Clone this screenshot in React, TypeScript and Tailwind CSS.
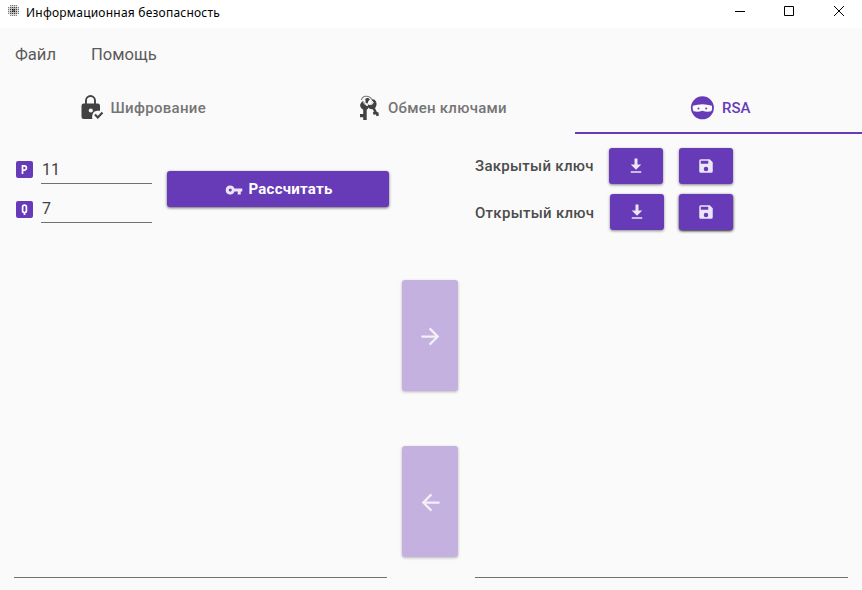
import React from 'react';

type IconProps = { d: string; className?: string };

function Icon({ d, className = '' }: IconProps) {
  return (
    <svg viewBox="0 0 24 24" fill="currentColor" className={`shrink-0 ${className}`}>
      <path fillRule="evenodd" d={d} />
    </svg>
  );
}

const DOWNLOAD = 'M14 2v8h5l-7 7-7-7h5V2zM5 19h14v2H5z';
const SAVE =
  'M15 9H5V5h10m-3 14a3 3 0 0 1-3-3 3 3 0 0 1 3-3 3 3 0 0 1 3 3 3 3 0 0 1-3 3m5-16H5a2 2 0 0 0-2 2v14a2 2 0 0 0 2 2h14a2 2 0 0 0 2-2V7l-4-4z';
const KEY =
  'M7 14a2 2 0 1 1 0-4 2 2 0 0 1 0 4m5.65-4A5.99 5.99 0 0 0 7 6a6 6 0 1 0 5.65 8H17v4h4v-4h2v-4H12.65z';
const ARROW_RIGHT = 'M4 11v2h12l-5.5 5.5 1.42 1.42L19.84 12l-7.92-7.92L10.5 5.5 16 11H4z';
const ARROW_LEFT = 'M20 11v2H8l5.5 5.5-1.42 1.42L4.16 12l7.92-7.92L13.5 5.5 8 11h12z';

function LockCheck() {
  return (
    <svg viewBox="0 0 24 26" className="-mt-0.5 h-[26px] w-6 shrink-0" fill="none">
      <path d="M6 11V6.500a4.500 4.500 0 0 1 9 0V11" stroke="#424242" strokeWidth="1.900" />
      <rect x="1.500" y="9.500" width="18.500" height="15.500" rx="2.200" fill="#424242" />
      <circle cx="10.800" cy="16.500" r="2.100" fill="#fafafa" />
      <path d="M12.500 26c-.8-2.500-.5-6 1.500-8.300l3-1h7V26z" fill="#fafafa" />
      <path d="M15 20.600l2.800 2.800 4.700-4.900" stroke="#424242" strokeWidth="2.100" />
    </svg>
  );
}

function Keys() {
  return (
    <svg viewBox="0 0 20 26" className="h-[26px] w-5 shrink-0" fill="#424242">
      <path d="M2.500 5C3 .3 10.500-.2 12.800 4.500" fill="none" stroke="#777" strokeWidth="1.100" />
      <path d="M4 6L2.500 7.200Q.6 9 1.200 11.300Q1.700 13.700 4.200 14.700V19H1v3.300h3.200V25h3.500V14.700Q9.800 13.700 9.400 11.500L7 10.500L5.700 8z" />
      <path d="M6.200 3.800L9 2.800L11 4.500L9.300 6L8.700 8.500L6.700 8z" />
      <path d="M12.700 4.500Q15.500 3.600 17 6.500Q18.500 10 16 13.200L18 17.300L19.200 17L20 20.500L17.700 21.300L16.600 19.200L14.800 20L13.800 17.400L15 16.500L13.700 14.200Q9.800 14.500 8.800 11.500L8.900 9.200Q10 10.300 11.700 9.800L14 7.600L12.500 6z" />
      <path d="M12.200 5L14.400 7.500L12.200 10.200" fill="none" stroke="#fafafa" strokeWidth=".9" />
      <path d="M6 5.500L4.500 7.800L6.800 10.200" fill="none" stroke="#fafafa" strokeWidth=".8" />
    </svg>
  );
}

function Ninja() {
  return (
    <svg viewBox="0 0 24 24" className="mt-0.5 size-6 shrink-0" fill="#673ab7">
      <circle cx="12.400" cy="11.800" r="11.500" />
      <path d="M2.700 9.700Q12.400 6.700 22 9.700Q22.500 13 21.300 15.300Q17 16.500 12.400 14.800Q8 16.500 3.500 15.300Q2.300 13 2.700 9.700z" fill="#fafafa" />
      <circle cx="8.500" cy="12.600" r="1" />
      <circle cx="16.200" cy="12.600" r="1" />
    </svg>
  );
}

function AppMark() {
  const dots: [number, number, number][] = [];
  for (let y = 0; y < 6; y++)
    for (let x = 0; x < 6; x++) {
      const distance = Math.hypot(x - 2.5, y - 2.5);
      if (distance < 3.3) dots.push([x * 2 + 1, y * 2, 1 - distance * 0.2]);
    }
  return (
    <svg viewBox="0 0 12 12" className="size-3 shrink-0" shapeRendering="crispEdges">
      <rect x="1" y="2" width="11" height="7" fill="#000" opacity=".14" />
      <rect x="3" y="0" width="7" height="11" fill="#000" opacity=".14" />
      <rect x="5" y="4" width="3" height="3" fill="#000" opacity=".4" />
      {dots.map(([x, y, opacity]) => (
        <rect key={`${x}-${y}`} x={x} y={y} width="1" height="1" fill="#000" opacity={opacity} />
      ))}
    </svg>
  );
}

function TitleBar() {
  return (
    <header className="flex h-7 items-start justify-between bg-white">
      <div className="flex pt-[5px] pl-[7px]">
        <AppMark />
        <span className="ml-[7px] h-4 text-[12px] leading-4 tracking-[0.22px] whitespace-nowrap text-black font-['Noto_Sans','Open_Sans',sans-serif]">
          Информационная безопасность
        </span>
      </div>
      <div className="flex gap-[38px] pt-[5px] pr-[17px]">
        <svg className="h-3 w-3" viewBox="0 0 12 12" shapeRendering="crispEdges"><path d="M2 6h10v1H2z" /></svg>
        <svg className="h-3 w-3" viewBox="0 0 12 12" fill="none" stroke="#000"><path d="M1.500 1.500h9v9h-9z" /></svg>
        <svg className="h-3 w-3" viewBox="0 0 12 12" stroke="#000"><path d="M1 1l10 10M11 1L1 11" /></svg>
      </div>
    </header>
  );
}

function PrimeField({ letter, value }: { letter: string; value: string }) {
  return (
    <label className="flex h-[39px] items-end">
      <span
        className={`ml-4 flex size-[17px] items-center justify-center rounded-[2px] bg-[#673ab7] text-white ${
          letter === 'P' ? 'mb-1.5' : 'mb-[5px]'
        }`}
      >
        <svg viewBox="0 0 17 17" className="size-[17px]" fill="none" stroke="currentColor" strokeWidth="1.700">
          {letter === 'P' ? (
            <path d="M6.500 13V4.900h1.800a2.100 2.100 0 0 1 0 4.200H6.500" />
          ) : (
            <path d="M8.500 4.200q-1.900 0-1.900 1.900v3.600q0 1.900 1.900 1.900t1.900-1.900V6.100q0-1.900-1.900-1.900zM8.500 11v3" />
          )}
        </svg>
      </span>
      <span className="ml-2 flex h-[30px] w-[111px] border-b border-[#707070] pl-px text-[16px] leading-[31px] text-[#424242]">
        {value}
      </span>
    </label>
  );
}

function IconButton({ d, raised = false }: { d: string; raised?: boolean }) {
  return (
    <button
      className={`flex h-9 w-[54px] items-center justify-center rounded-[3px] bg-[#673ab7] text-white/87 ${
        raised ? 'shadow-[0_1px_3px_#000e]' : 'shadow-[0_1px_3px_#0007]'
      }`}
    >
      <Icon d={d} className="size-[18px]" />
    </button>
  );
}

function ArrowButton({ d }: { d: string }) {
  return (
    <button className="flex h-[111px] w-14 items-center justify-center rounded-[3px] bg-[#c4b1e0] text-white/80 shadow-[0_1px_3px_#0004]">
      <Icon d={d} className="mt-px ml-px size-[27px]" />
    </button>
  );
}

export default function App() {
  return (
    <div className="flex h-[590px] w-[862px] flex-col overflow-hidden bg-[#fafafa] font-[Roboto,sans-serif] text-[#4c4c4c]">
      <TitleBar />
      <nav className="flex h-[54px] items-center gap-[35px] pl-[15px] text-[16.6px] text-[#5a5a5a]">
        <span>Файл</span>
        <span>Помощь</span>
      </nav>
      <nav className="grid h-[52px] grid-cols-[288px_287px_287px] text-[15px] font-medium tracking-[0.3px] text-[#757575]">
        <div className="flex items-center pl-20">
          <LockCheck />
          <span className="ml-[6.500px]">Шифрование</span>
        </div>
        <div className="flex items-center pl-[71px]">
          <Keys />
          <span className="ml-[9px] tracking-[0.26px]">Обмен ключами</span>
        </div>
        <div className="flex items-center border-b-2 border-[#673ab7] pl-[115px] tracking-normal text-[#673ab7]">
          <Ninja />
          <span className="mt-0.5 ml-[8px]">RSA</span>
        </div>
      </nav>
      <section className="flex h-[108px]">
        <div className="flex w-[475px]">
          <div className="pt-[11px]">
            <PrimeField letter="P" value="11" />
            <PrimeField letter="Q" value="7" />
          </div>
          <button className="mt-[37px] ml-[15px] flex h-9 w-[222px] items-center justify-center rounded-[3px] bg-[#673ab7] pt-px pl-0.5 text-[15px] font-bold tracking-[0.25px] text-white shadow-[0_1px_3px_#0009]">
            <Icon d={KEY} className="mr-[5px] size-[18px] text-white/87" />
            Рассчитать
          </button>
        </div>
        <div className="flex flex-col gap-[10px] pt-[14px] text-[15px] font-medium tracking-[0.28px]">
          <div className="flex items-center">
            <span className="w-[134px]">Закрытый ключ</span>
            <IconButton d={DOWNLOAD} />
            <span className="w-4" />
            <IconButton d={SAVE} />
          </div>
          <div className="flex items-center">
            <span className="w-[135px] pt-0.5">Открытый ключ</span>
            <IconButton d={DOWNLOAD} />
            <span className="w-[15px]" />
            <IconButton d={SAVE} raised />
          </div>
        </div>
      </section>
      <main className="flex h-[336px] px-[14px]">
        <div className="w-[373px] border-b border-[#707070]" />
        <div className="ml-[15px] flex w-14 flex-col gap-[55px] pt-[38px]">
          <ArrowButton d={ARROW_RIGHT} />
          <ArrowButton d={ARROW_LEFT} />
        </div>
        <div className="ml-[17px] w-[373px] border-b border-[#707070]" />
      </main>
    </div>
  );
}
